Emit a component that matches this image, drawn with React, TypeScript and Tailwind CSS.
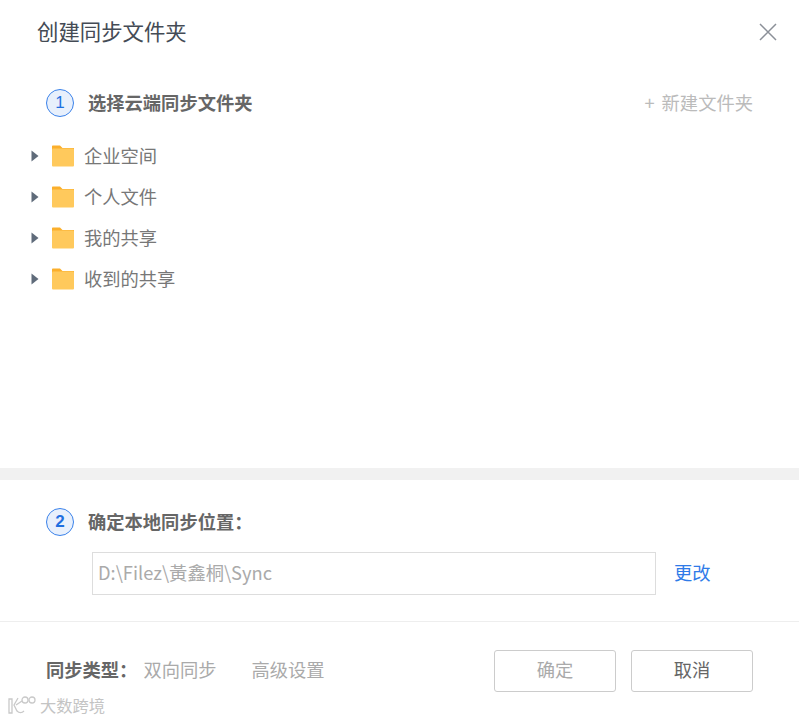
import React from 'react'

const font = { fontFamily: '"Noto Sans CJK SC", "Liberation Sans", sans-serif' }

const folders = ['企业空间', '个人文件', '我的共享', '收到的共享']

const StepBadge: React.FC<{ n: number; bold?: boolean }> = ({ n, bold }) => (
  <div
    className={`flex h-[28px] w-[28px] shrink-0 items-center justify-center rounded-full border-[1.5px] border-[#3b82ea] bg-[#e8f0fc] text-[17px] text-[#1f6fe0] ${
      bold ? 'font-bold' : ''
    }`}
    style={{ fontFamily: '"Liberation Sans", sans-serif' }}
  >
    {n}
  </div>
)

const FolderIcon = () => (
  <svg width="22" height="22" viewBox="0 0 22 22" className="shrink-0">
    <path d="M0 1.500C0 .9.400 .500 1 .500H8l2.500 2.500H22V6H0z" fill="#fbaf2c" />
    <rect x="0" y="3.500" width="22" height="18" rx="1" fill="#ffc95c" />
  </svg>
)

const FolderRow: React.FC<{ name: string }> = ({ name }) => (
  <div className="flex h-[41px] items-center">
    <svg width="8" height="12" viewBox="0 0 8 12" className="ml-[31px] shrink-0">
      <path d="M0.500 0.500L7.500 6L0.500 11.500z" fill="#5f6b7a" />
    </svg>
    <div className="ml-[13px]">
      <FolderIcon />
    </div>
    <span className="ml-[10px] text-[18.3px] text-[#777777]">{name}</span>
  </div>
)

export default function App() {
  return (
    <div className="relative flex h-[720px] w-[799px] flex-col overflow-hidden bg-white" style={font}>
      {/* Header */}
      <div className="flex h-[64px] items-center justify-between pl-[37px] pr-[21px]">
        <h1 className="pb-[2px] text-[21.4px] font-normal text-[#444b55]">创建同步文件夹</h1>
        <svg width="20" height="20" viewBox="0 0 20 20">
          <path d="M2 2L18 18M18 2L2 18" stroke="#8b9098" strokeWidth="1.500" fill="none" />
        </svg>
      </div>

      {/* Step 1 */}
      <div className="flex h-[404px] flex-col">
        <div className="mt-[25px] flex h-[28px] items-center justify-between pl-[46px] pr-[46px]">
          <div className="flex items-center gap-[14px]">
            <StepBadge n={1} />
            <span className="text-[18.3px] font-bold text-[#666666]">选择云端同步文件夹</span>
          </div>
          <span className="text-[18.3px] text-[#bbbbbb]">
            <span className="mr-[7px]">+</span>新建文件夹
          </span>
        </div>
        <div className="mt-[18px]">
          {folders.map((f) => (
            <FolderRow key={f} name={f} />
          ))}
        </div>
      </div>

      <div className="h-[12px] bg-[#f1f1f1]" />

      {/* Step 2 */}
      <div className="flex h-[142px] flex-col border-b border-[#eeeeee] pl-[46px]">
        <div className="mt-[28px] flex h-[28px] items-center gap-[14px]">
          <StepBadge n={2} bold />
          <span className="text-[18.3px] font-bold text-[#666666]">确定本地同步位置：</span>
        </div>
        <div className="mt-[16px] flex items-center">
          <div className="ml-[46px] flex h-[43px] w-[564px] items-center border border-[#dddddd] pb-[2px] pl-[5px] text-[18.3px] text-[#aaaaaa]">
            D:\Filez\黃鑫桐\Sync
          </div>
          <span className="mb-[2px] ml-[18px] text-[18.3px] text-[#2f7be8]">更改</span>
        </div>
      </div>

      {/* Footer */}
      <div className="flex flex-1 items-start justify-between pl-[46px] pr-[46px] pt-[28px]">
        <div className="flex h-[42px] items-center pb-[2px] text-[18.3px]">
          <span className="font-bold text-[#666666]">同步类型：</span>
          <span className="ml-[6px] text-[#aaaaaa]">双向同步</span>
          <span className="ml-[35px] text-[#aaaaaa]">高级设置</span>
        </div>
        <div className="flex gap-[15px]">
          <button className="h-[42px] w-[122px] rounded-[3px] border border-[#cccccc] bg-white pb-[2px] text-[18.3px] text-[#aaaaaa]">
            确定
          </button>
          <button className="h-[42px] w-[122px] rounded-[3px] border border-[#cccccc] bg-white pb-[2px] text-[18.3px] text-[#666666]">
            取消
          </button>
        </div>
      </div>

      {/* Watermark */}
      <div className="absolute bottom-[5px] left-[7px] flex items-center gap-[3px]">
        <svg width="30" height="20" viewBox="0 0 30 20" fill="none" stroke="#c9c9c9" strokeWidth="1.300">
          <path d="M2 4V18H5V4z" />
          <path d="M11 3L7 10L10 16C12 18 15 18 17 16" />
          <path d="M15 6L9 10" />
          <circle cx="18" cy="5" r="3" />
          <circle cx="25" cy="5" r="3" />
        </svg>
        <span className="text-[16.3px] leading-[20px] text-[#c4c4c4]">大数跨境</span>
      </div>
    </div>
  )
}
